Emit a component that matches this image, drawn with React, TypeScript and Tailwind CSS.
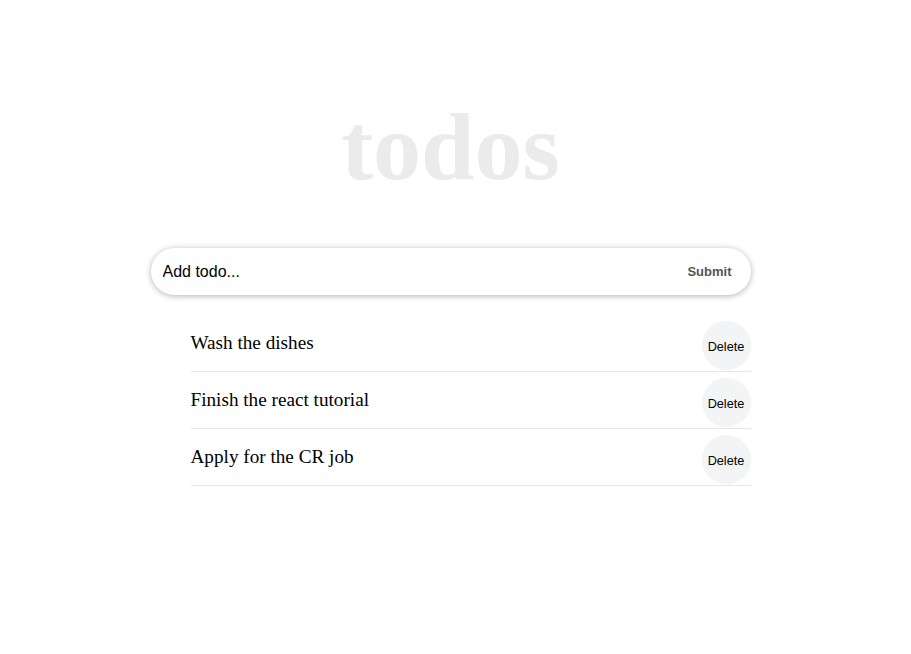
const todos = ["Wash the dishes", "Finish the react tutorial", "Apply for the CR job"];

const TodoRow = ({ text }: { text: string }) => {
  return (
    <li className="flex items-center justify-between border-b border-[#e6e6e6] h-[57px]">
      <span className="text-[19.2px] text-black font-['Liberation_Serif',serif]">{text}</span>
      <button className="w-[49px] h-[49px] mt-[5px] pt-[5px] rounded-full bg-[#f3f4f6] text-[12.7px] text-black font-['Liberation_Sans',Arial,sans-serif]">
        Delete
      </button>
    </li>
  );
};

export default function App() {
  return (
    <div className="min-h-[654px] bg-white flex flex-col items-center pr-[10px]">
      <h1 className="mt-[92px] text-[96px] leading-[110px] font-bold text-[#ebebeb] font-['Liberation_Serif',serif]">
        todos
      </h1>
      <div className="w-[600px] mt-[46px]">
        <form className="flex items-center h-[47px] rounded-full bg-white shadow-[0_1px_6px_rgba(0,0,0,0.3)] pl-3 pr-[19px]">
          <input
            autoFocus
            placeholder="Add todo..."
            className="flex-1 outline-none bg-transparent text-[16px] text-black placeholder:text-black font-['Liberation_Sans',Arial,sans-serif]"
          />
          <button
            type="button"
            className="text-[13px] font-bold text-[#555555] font-['Liberation_Sans',Arial,sans-serif]"
          >
            Submit
          </button>
        </form>
        <ul className="ml-10 mt-[20px]">
          {todos.map((t) => (
            <TodoRow key={t} text={t} />
          ))}
        </ul>
      </div>
    </div>
  );
}
